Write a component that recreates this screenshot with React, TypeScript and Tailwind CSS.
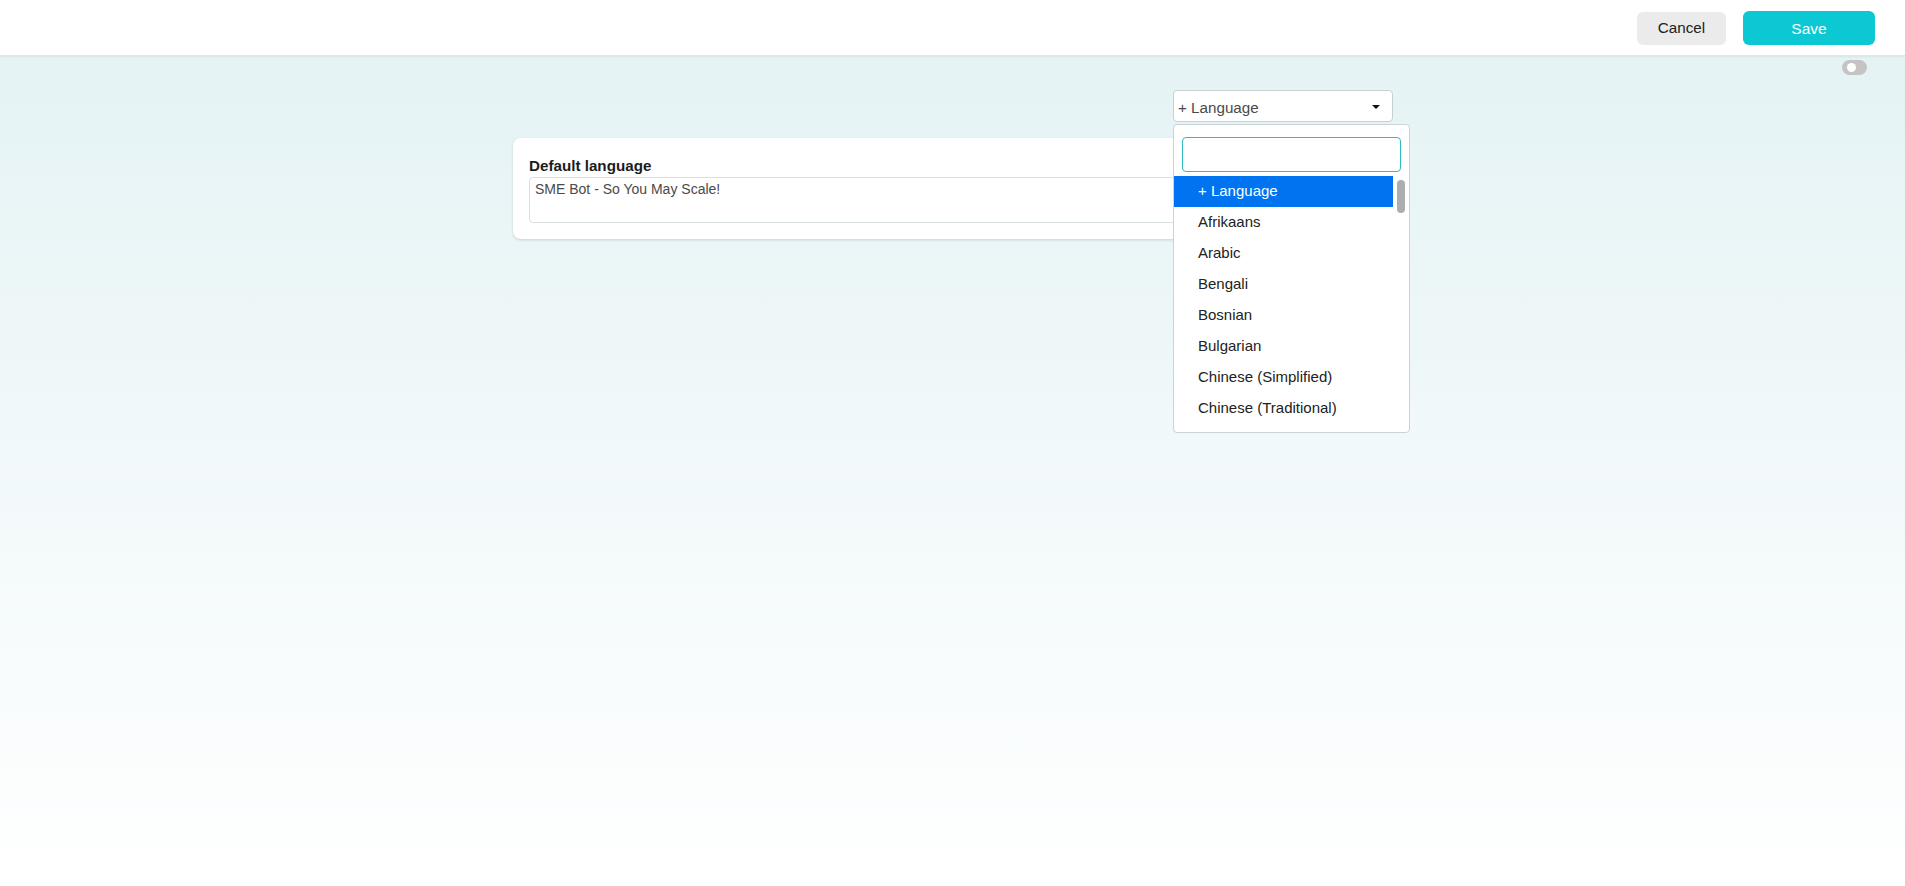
export default function App() {
  const rows = ["Afrikaans", "Arabic", "Bengali", "Bosnian", "Bulgarian", "Chinese (Simplified)", "Chinese (Traditional)"];
  return (
    <div className="h-[886px] overflow-hidden bg-gradient-to-b from-[#e3f2f4] to-white font-['Liberation_Sans',Arial,sans-serif]">
      <header className="h-[56px] bg-white border-b border-[#dfe7e8] shadow-[0_1px_2px_rgba(0,0,0,0.06)] flex items-center justify-end pr-[30px] pt-[1px]">
        <button className="w-[89px] h-[33px] pt-[1px] rounded-[6px] bg-[#ebebeb] text-[#222] text-[15.2px]">Cancel</button>
        <button className="ml-[17px] w-[132px] h-[34px] pt-[1px] rounded-[6px] bg-[#0cc8d2] text-white text-[15.5px]">Save</button>
      </header>
      <div className="flex justify-end pr-[38px] pt-[4px]">
        <div className="w-[25px] h-[15px] rounded-full bg-[#c4c4c4] flex items-center pl-[5px]">
          <div className="w-[9px] h-[9px] rounded-full bg-white" />
        </div>
      </div>
      <main className="w-[880px] ml-[513px]">
        <div className="flex justify-end mt-[15px]">
          <div className="relative w-[220px]">
            <div className="h-[32px] bg-white border border-[#c8d0d3] rounded-[4px] flex items-center justify-between pl-[4px] pr-[12px] pt-[4px] text-[15.2px] text-[#4a4a4a]">
              <span>+ Language</span>
              <span className="w-0 h-0 -mt-[2px] border-l-[4px] border-r-[4px] border-t-[4px] border-l-transparent border-r-transparent border-t-[#111]" />
            </div>
            <div className="absolute z-10 left-0 top-[34px] w-[237px] h-[309px] bg-white border border-[#c8d4d8] rounded-[4px] text-[15px] text-[#222]">
              <div className="pt-[12px] px-[8px] pb-[4px]">
                <div className="h-[35px] border border-[#2dbcc6] rounded-[4px] bg-white" />
              </div>
              <div className="relative">
                <div className="h-[31px] w-[219px] bg-[#0074f0] text-white flex items-center pl-[24px] pb-[1px]">+ Language</div>
                {rows.map((r) => (
                  <div key={r} className="h-[31px] w-[219px] flex items-center pl-[24px] pb-[1px]">{r}</div>
                ))}
                <div className="absolute right-[4px] top-[4px] w-[8px] h-[33px] rounded-full bg-[#adadb1]" />
              </div>
            </div>
          </div>
        </div>
        <section className="mt-[16px] h-[101px] bg-white rounded-[8px] shadow-[0_1px_3px_rgba(0,0,0,0.15)] px-[16px] pt-[17px]">
          <h2 className="text-[15.2px] leading-[21px] font-bold text-[#1c1c1c]">Default language</h2>
          <div className="mt-[1px] h-[46px] border border-[#d9e0e2] rounded-[4px] px-[5px] pt-[1px] text-[14px] leading-[20px] text-[#4a4a4a]">SME Bot - So You May Scale!</div>
        </section>
      </main>
    </div>
  );
}
